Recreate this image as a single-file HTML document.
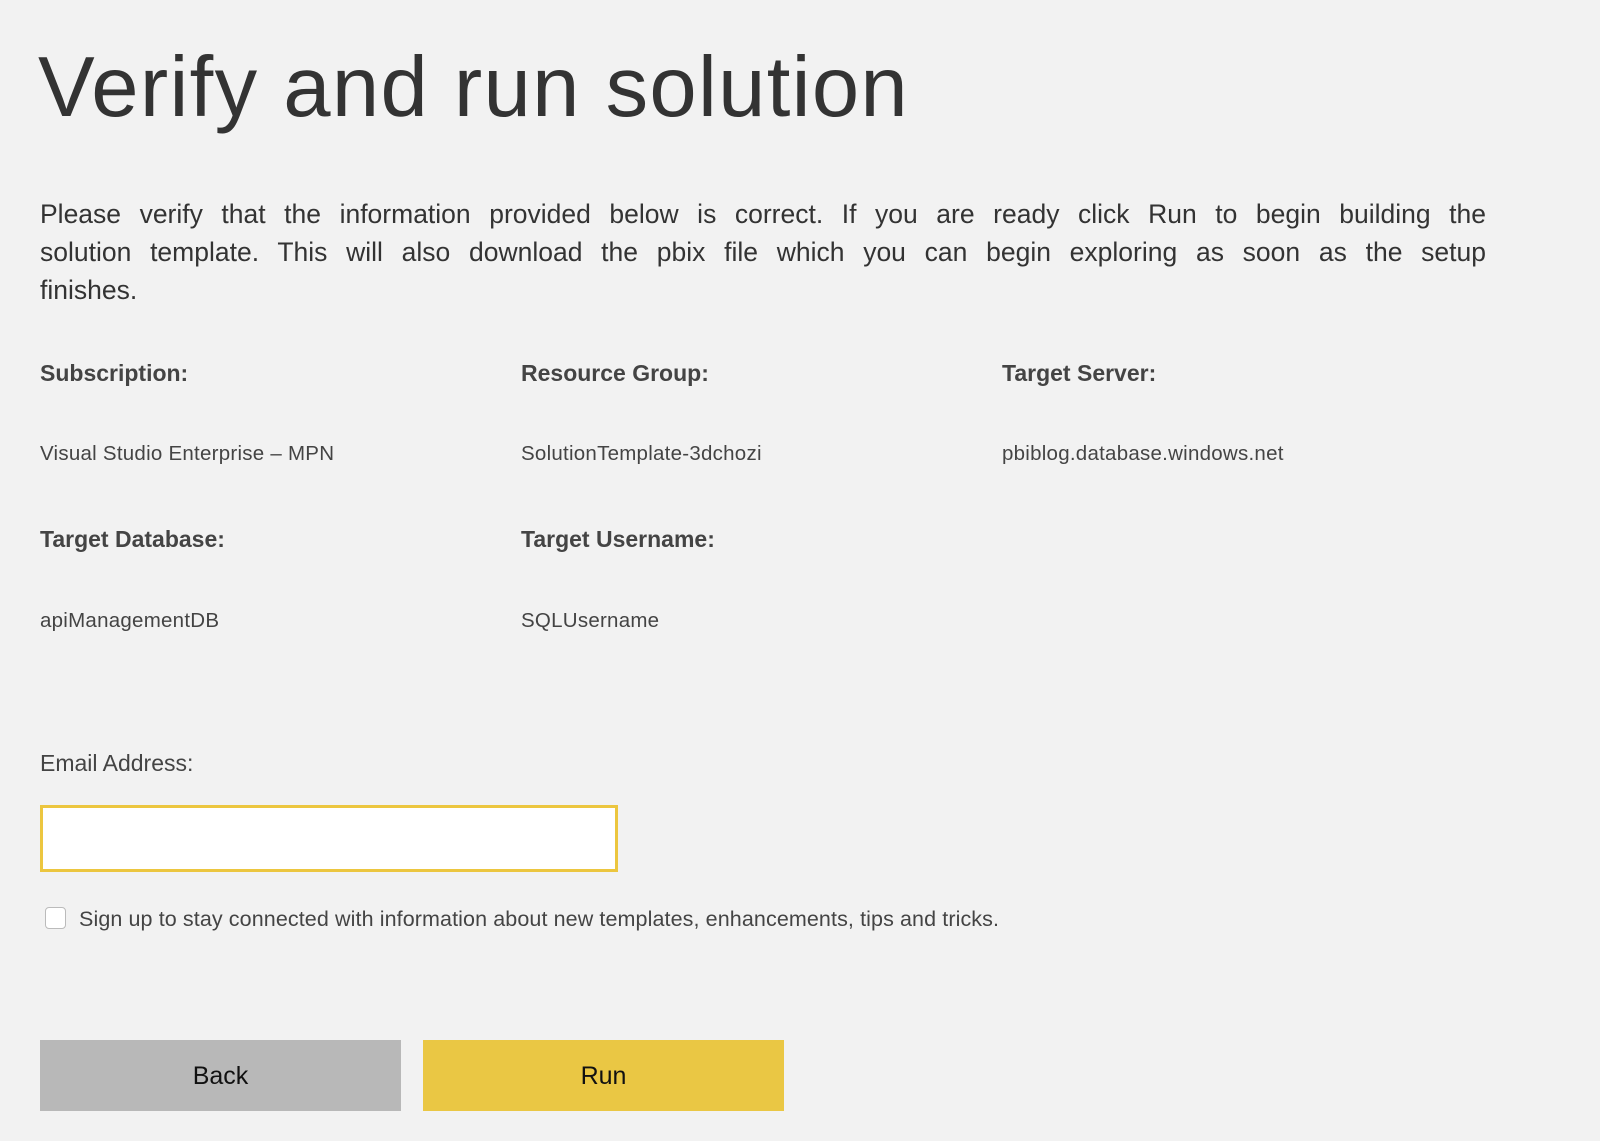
<!DOCTYPE html>
<html><head><meta charset="utf-8"><style>
html,body{margin:0;padding:0;}
body{width:1600px;height:1141px;background:#f2f2f2;position:relative;overflow:hidden;font-family:"Liberation Sans",sans-serif;color:#444;}
.a{position:absolute;line-height:1;white-space:nowrap;}
h1{position:absolute;left:38px;top:45px;margin:0;font-weight:normal;font-size:85px;line-height:1;color:#333;letter-spacing:1.3px;}
.p{position:absolute;left:40px;width:1446px;margin:0;font-size:26.5px;line-height:38px;text-align:justify;text-align-last:justify;color:#333;white-space:nowrap;}
.l{font-size:23px;font-weight:bold;color:#444;}
.v{font-size:20.5px;color:#444;letter-spacing:0.25px;}
.btn{position:absolute;top:1040px;width:361px;height:71px;line-height:73px;text-align:center;font-size:25px;color:#111;}
</style></head><body>
<h1>Verify and run solution</h1>
<div class="p" style="top:195px">Please verify that the information provided below is correct. If you are ready click Run to begin building the</div>
<div class="p" style="top:233px">solution template. This will also download the pbix file which you can begin exploring as soon as the setup</div>
<div class="p" style="top:271px;text-align-last:left">finishes.</div>
<div class="a l" style="left:40px;top:362px">Subscription:</div>
<div class="a l" style="left:521px;top:362px">Resource Group:</div>
<div class="a l" style="left:1002px;top:362px">Target Server:</div>
<div class="a v" style="left:40px;top:444px">Visual Studio Enterprise – MPN</div>
<div class="a v" style="left:521px;top:444px">SolutionTemplate-3dchozi</div>
<div class="a v" style="left:1002px;top:444px">pbiblog.database.windows.net</div>
<div class="a l" style="left:40px;top:528px">Target Database:</div>
<div class="a l" style="left:521px;top:528px">Target Username:</div>
<div class="a v" style="left:40px;top:611px">apiManagementDB</div>
<div class="a v" style="left:521px;top:611px">SQLUsername</div>
<div class="a" style="left:40px;top:752px;font-size:23px;color:#444">Email Address:</div>
<div style="position:absolute;left:40px;top:805px;width:572px;height:61px;background:#fff;border:3px solid #ecc63f;"></div>
<div style="position:absolute;left:45px;top:907px;width:19px;height:20px;background:#fff;border:1px solid #bbb;border-radius:4px;"></div>
<div class="a" style="left:79px;top:909px;font-size:21.5px;letter-spacing:0.1px;color:#444">Sign up to stay connected with information about new templates, enhancements, tips and tricks.</div>
<div class="btn" style="left:40px;background:#b8b8b8;">Back</div>
<div class="btn" style="left:423px;background:#eac744;">Run</div>
</body></html>
